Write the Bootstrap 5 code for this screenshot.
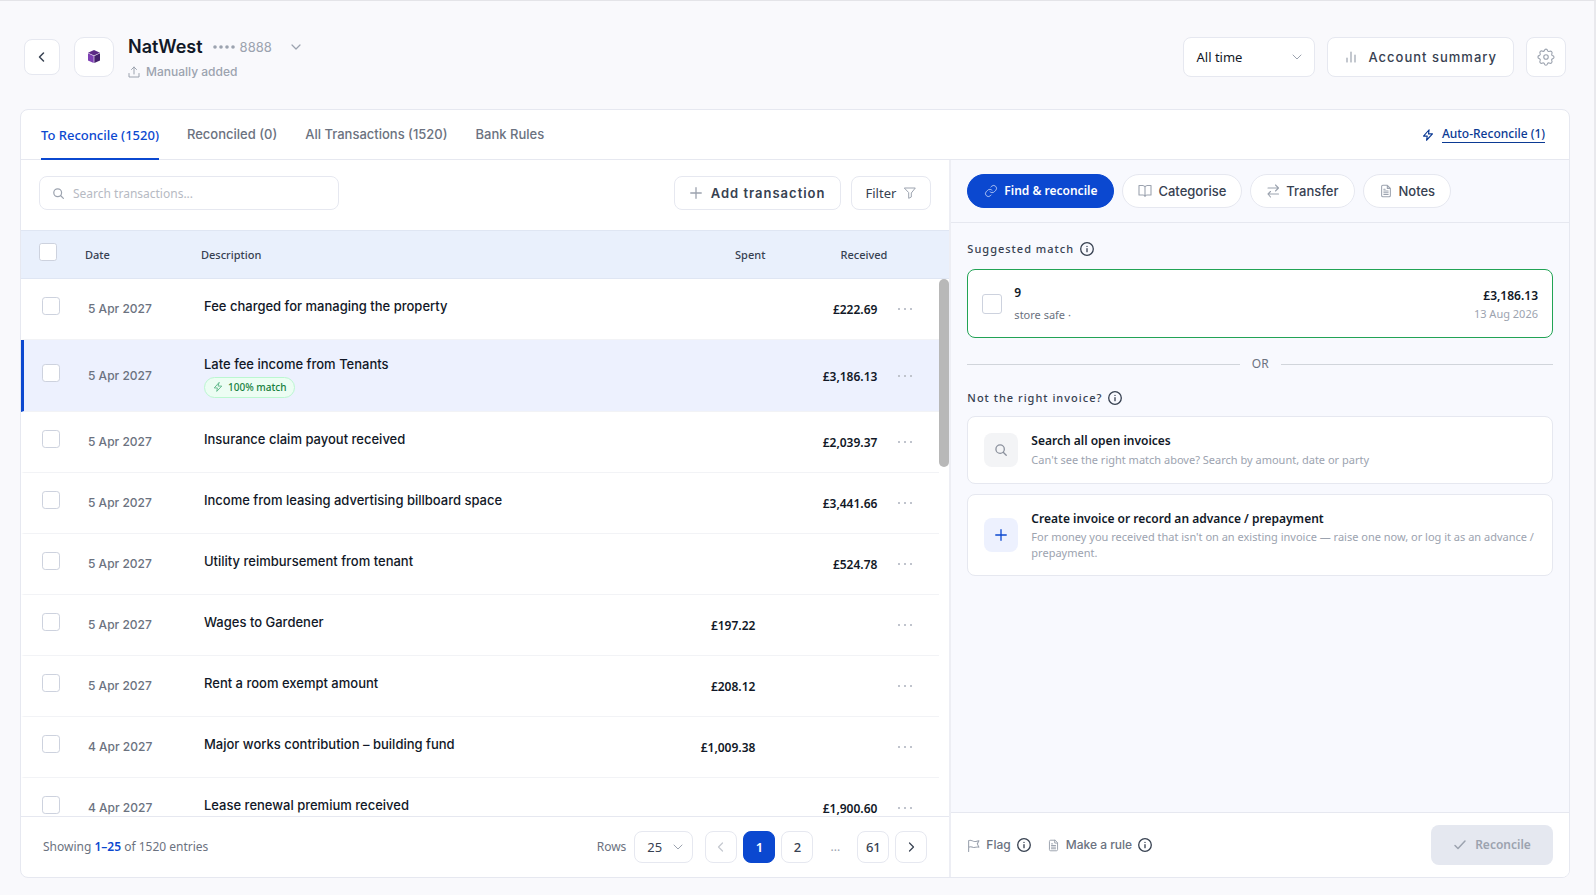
<!DOCTYPE html>
<html lang="en">
<head>
<meta charset="utf-8">
<meta name="viewport" content="width=device-width, initial-scale=1">
<title>NatWest – To Reconcile</title>
<link href="https://cdn.jsdelivr.net/npm/bootstrap@5.3.0/dist/css/bootstrap.min.css" rel="stylesheet">
<style>
:root{--line:#e6e8f0;--ink:#111827;--slate:#374151;--gray:#6b7280;--mute:#9ca3af;--blue:#0b48d0;--seg:"Noto Sans","Open Sans",sans-serif}
body{font-family:Inter,"Liberation Sans",sans-serif;font-size:13px;line-height:20px;color:var(--ink);background:#f9f9fc}
.page{height:100vh;min-height:600px;border-top:1px solid #e4e4e8;border-right:2px solid #e9e9ed;padding:36px 24px 17px 20px}
svg{flex:none;fill:none;stroke:currentColor;stroke-width:1.5;stroke-linecap:round;stroke-linejoin:round}
.seg{font-family:var(--seg)}
.box{background:#fff;border:1px solid var(--line);border-radius:8px;color:var(--slate);display:inline-flex;align-items:center;justify-content:center;padding:0;font-size:13px;line-height:20px}
.box svg{color:var(--mute)}
.box svg.dark-i,.dark-i{color:var(--slate)}
.mn0{min-height:0}
.head-bar{padding:0 4px;height:40px;margin-bottom:32px}
.head-acts{gap:12px}
.sq-back{width:36px;height:36px}
.sq{width:40px;height:40px}
.tile{border-radius:10px;margin:0 14px}
.tile svg{stroke:none}
.who{padding-top:4px}
.acct{font-size:18px;line-height:22px;font-weight:600}
.stars{margin:0 5px 0 10px}
.stars circle{fill:currentColor;stroke:none}
.swap{margin-left:18px}
.sub{margin-top:4px;gap:6px}
.mute{color:var(--mute)}
.form-select{border-color:var(--line);border-radius:8px;color:var(--ink);font-size:13px;line-height:20px;background-image:url("data:image/svg+xml,%3Csvg xmlns='http://www.w3.org/2000/svg' viewBox='0 0 12 12'%3E%3Cpath fill='none' stroke='%239ca3af' stroke-linecap='round' stroke-linejoin='round' d='M2 4l4 4 4-4'/%3E%3C/svg%3E");background-size:12px}
.sel-time{width:132px;height:40px;padding:0 36px 0 12px;background-position:right 11px center}
.sel-rows{width:59px;height:32px;padding:0 24px 0 12px;background-position:right 8px center;color:var(--slate)}
.btn-sum{height:40px;padding:0 16px;gap:10px;letter-spacing:1px;font-weight:500}
.panel{background:#fff;border:1px solid var(--line);border-radius:8px;overflow:hidden}
.tabs{height:50px;border-bottom:1px solid var(--line);padding:0 24px 0 20px;flex:none}
.tabs .tab{color:var(--gray);text-decoration:none;font-weight:500;display:flex;align-items:center;height:50px;margin-right:28px;border-bottom:2px solid transparent}
.tabs .tab.active{font-family:var(--seg);color:var(--blue);border-color:var(--blue);padding-top:2px}
.auto{color:#0b3a94;text-decoration:none;font-weight:500;font-size:12px;gap:8px}
.auto span{border-bottom:1px solid #0b3a94;line-height:16px}
.left{flex:1 1 0;min-width:0;border-right:2px solid #edeef4}
.right{width:39.9%;min-width:0;background:#f8f9fe}
.tools{padding:16px 18px 20px;gap:10px}
.search{width:300px;height:34px;padding:0 12px;gap:8px;justify-content:flex-start}
.search input{border:0;outline:0;background:none;min-width:0;flex:1;padding:2px 0 0;font-size:12px;color:var(--ink)}
.search input::placeholder{color:#b6bac3}
.btn-add{height:34px;padding:0 14px;gap:8px;letter-spacing:1px;font-weight:600}
.btn-fil{height:34px;padding:0 14px;gap:8px}
.grid{width:100%;table-layout:fixed;border-collapse:separate;border-spacing:0}
.grid th,.grid td{padding:0;vertical-align:middle}
.grid th{height:49px;background:#e9f0fc;border:solid #dfe6f3;border-width:1px 0;font-family:var(--seg);font-size:11px;font-weight:500}
.grid td{height:61px;border-bottom:1px solid #f2f3f6}
.grid td:first-child{border-left:3px solid transparent}
.grid .on td{height:72px;background:#edf1fe}
.grid .on td:first-child{border-left-color:var(--blue)}
.grid .c1{width:64px;padding-left:18px}
.grid .c2{width:116px}
.grid .c4{width:120px;text-align:right}
.grid .c5{width:122px;text-align:right}
.grid .c6{width:62px}
.grid th{color:var(--slate)}
.grid td.c1{width:67px}
.grid td.c2{color:var(--gray);font-size:12px;font-weight:500}
.grid td.c3{font-weight:500;padding-bottom:6px}
.grid .on td.c3{padding-bottom:0}
.grid td.c4,.grid td.c5{font-family:var(--seg);font-size:12px;font-weight:600;padding-top:2px}
.form-check-input{width:18px;height:18px;margin:0 0 6px;border:1px solid #cdd2de;border-radius:5px;display:block}
.more{border:0;background:none;padding:0 0 0 20px;display:block;color:#c0c4cd;line-height:0}
.more svg{fill:currentColor;stroke:none}
.pill-ok{display:flex;width:fit-content;align-items:center;gap:5px;height:21px;margin-top:3px;padding:0 8px;border:1px solid #bbf7d0;border-radius:11px;background:#ecfdf3;color:#15803d;font:500 10px/16px var(--seg)}
.pill-ok svg{color:#5fb98a}
.bar-thumb{width:10px;height:188px;border-radius:5px;background:#b8b8b8;flex:none}
.foot{height:61px;flex:none;border-top:1px solid var(--line);padding:0 22px;font-size:12px;color:var(--gray)}
.foot b{color:var(--blue);font-weight:600}
.pages{gap:6px;margin-left:12px}
.pg{width:32px;height:32px;text-decoration:none;font-family:var(--seg);font-weight:500}
.pg.cur{background:var(--blue);border-color:var(--blue);color:#fff;font-weight:600}
.gap-dots{width:32px;text-align:center}
.modes{padding:14px 16px;border-bottom:1px solid var(--line)}
.mode{height:34px;border-radius:17px;padding:0 15px;gap:6px;font-weight:500}
.mode.cur{background:var(--blue);border-color:var(--blue);color:#fff;font-family:var(--seg);font-size:12px;font-weight:600;padding:0 16px}
.mode.cur svg{color:#b9ccf6}
.cap{font-family:var(--seg);font-size:11px;font-weight:500;letter-spacing:1px;color:var(--slate);gap:6px}
.opt{background:#fff;border:1px solid var(--line);border-radius:8px;padding:14px 16px;gap:13px;text-align:left;width:100%;font-family:var(--seg);font-size:12px;color:var(--ink)}
.opt b{font-weight:600;display:block}
.opt small{display:block;color:var(--mute);font-size:11px;line-height:16px}
.opt .one{line-height:18px}
.ic{width:34px;height:34px;border-radius:8px;background:#f3f4f6;color:#8b919d;display:flex;align-items:center;justify-content:center;flex:none}
.ic.add{background:#edf1fe;color:var(--blue)}
.match{border-color:#22a355;padding:14px;gap:12px}
.match .ref-no{line-height:18px;margin-bottom:5px}
.match .party{color:var(--gray)}
.match .form-check-input{width:20px;height:20px;margin:0}
.gap-b{margin-bottom:10px}
.or{gap:12px;margin:16px 0 14px;font:12px/20px var(--seg);color:var(--gray)}
.rule-line{height:1px;background:#d1d5db;flex:1}
.act{height:65px;flex:none;border-top:1px solid var(--line);background:#fff;padding:0 16px}
.act .txt{border:0;background:none;padding:0;color:var(--gray);font-weight:500;font-size:12px;display:flex;align-items:center;gap:6px}
.act .txt svg:first-child{color:var(--mute)}
.btn-rec{width:122px;height:40px;border:0;border-radius:8px;background:#e5e8f0;color:#9ca3af;font-family:var(--seg);font-size:12px;font-weight:600;display:flex;align-items:center;justify-content:center;gap:8px}
</style>
</head>
<body>
<svg width="0" height="0" class="position-absolute" aria-hidden="true">
<symbol id="bolt" viewBox="0 0 16 16"><path d="M9.500 1L2 9.500H7L6 15L14 6.500H8.700z"/></symbol>
<symbol id="info" viewBox="0 0 16 16"><circle cx="8" cy="8" r="7.200"/><path d="M8 7.500v3.500M8 4.900v.2"/></symbol>
<symbol id="doc" viewBox="0 0 16 16"><g stroke-width="1.200"><path d="M9.500 1.500H4.500a1.500 1.500 0 0 0-1.500 1.500v10a1.500 1.500 0 0 0 1.500 1.500h7a1.500 1.500 0 0 0 1.500-1.500V5zM9.500 1.500V5H13M5.500 8h5M5.500 10h5M5.500 12h5M5.500 6h1.500"/></g></symbol>
<symbol id="lens" viewBox="0 0 16 16"><circle cx="7" cy="7" r="4.800"/><path d="M10.500 10.500L14 14"/></symbol>
<symbol id="plus" viewBox="0 0 16 16"><path d="M8 2v12M2 8h12"/></symbol>
<symbol id="dots" viewBox="0 0 16 4"><path d="M1 1h2v2H1zM7 1h2v2H7zM13 1h2v2h-2z"/></symbol>
</svg>
<div class="page d-flex flex-column">
<header class="head-bar d-flex align-items-center">
<button class="box sq-back" aria-label="Back"><svg class="dark-i" width="12" height="12" viewBox="0 0 12 12"><path d="M7.500 2L3.500 6l4 4"/></svg></button>
<span class="box sq tile"><svg width="14" height="16" viewBox="0 0 14 16"><path fill="#5b2a86" d="M7 1l6 2.700L7 6.600 1 3.700z"/><path fill="#7e3fb4" d="M1 4.300l5.700 2.800V14L1 11.500z"/><path fill="#43206b" d="M13 4.300L7.300 7.100V14l5.700-2.500z"/></svg></span>
<div class="who">
<div class="d-flex align-items-center"><span class="acct">NatWest</span><svg class="mute stars" width="22" height="4" viewBox="0 0 22 4"><circle cx="2" cy="2" r="1.800"/><circle cx="8" cy="2" r="1.800"/><circle cx="14" cy="2" r="1.800"/><circle cx="20" cy="2" r="1.800"/></svg><span class="mute">8888</span><button class="border-0 bg-transparent p-0 mute d-flex swap" aria-label="Switch account"><svg width="12" height="12" viewBox="0 0 12 12"><path stroke-width="1.200" d="M2 4l4 4 4-4"/></svg></button></div>
<div class="d-flex align-items-center sub mute fw-medium"><svg width="12" height="12" viewBox="0 0 12 12"><path stroke-width="1" d="M6 8V1M3.500 3.500L6 1l2.500 2.500M1 7.500V11h10V7.500"/></svg><span style="font-size:12px">Manually added</span></div>
</div>
<div class="d-flex head-acts ms-auto">
<select class="form-select sel-time seg" aria-label="Period"><option>All time</option></select>
<button class="box btn-sum"><svg width="14" height="14" viewBox="0 0 14 14"><path stroke-width="1.200" d="M3 8v4M7 2v10M11 5v7"/></svg>Account summary</button>
<button class="box sq" aria-label="Settings"><svg width="18" height="18" viewBox="0 0 24 24"><circle cx="12" cy="12" r="3"/><path d="M12 1.500c1.300 0 1.800.8 2.200 2.200.4.900 1.300 1.200 2.200.8 1.300-.7 2.200-.6 3.100.3.900.9.900 1.900.2 3.100-.4.900 0 1.800.8 2.200 1.400.4 2.200.900 2.200 2.200s-.8 1.800-2.200 2.200c-.9.400-1.200 1.300-.8 2.200.7 1.300.6 2.200-.3 3.100-.9.900-1.900.9-3.100.2-.9-.4-1.800 0-2.200.8-.4 1.400-.9 2.200-2.200 2.200s-1.800-.8-2.200-2.200c-.4-.9-1.300-1.200-2.200-.8-1.300.7-2.200.6-3.100-.3-.9-.9-.9-1.900-.2-3.100.4-.9 0-1.800-.8-2.200C2 13.900 1.200 13.300 1.200 12s.8-1.800 2.200-2.200c.9-.4 1.200-1.300.8-2.200-.7-1.300-.6-2.200.3-3.100.9-.9 1.900-.9 3.100-.2.900.4 1.800 0 2.200-.8.400-1.300.9-2 2.200-2z"/></svg></button>
</div>
</header>
<main class="panel flex-grow-1 d-flex flex-column mn0">
<nav class="tabs d-flex align-items-center">
<a class="tab active" href="#">To Reconcile (1520)</a><a class="tab" href="#">Reconciled (0)</a><a class="tab" href="#">All Transactions (1520)</a><a class="tab" href="#">Bank Rules</a>
<a class="auto seg d-flex align-items-center ms-auto" href="#"><svg width="12" height="12"><use href="#bolt"/></svg><span>Auto-Reconcile (1)</span></a>
</nav>
<div class="d-flex flex-grow-1 mn0">
<section class="left d-flex flex-column">
<div class="tools d-flex align-items-center">
<label class="box search seg"><svg width="13" height="13"><use href="#lens"/></svg><input type="text" placeholder="Search transactions..." aria-label="Search transactions"></label>
<button class="box btn-add ms-auto"><svg width="14" height="14"><use href="#plus"/></svg>Add transaction</button>
<button class="box btn-fil seg">Filter<svg width="12" height="12" viewBox="0 0 12 12"><path stroke-width="1" d="M.7 1h10.600L7.300 6v4L4.700 11.300V6z"/></svg></button>
</div>
<table class="grid"><thead><tr><th class="c1"><input class="form-check-input" type="checkbox" aria-label="Select all"></th><th class="c2">Date</th><th class="c3">Description</th><th class="c4">Spent</th><th class="c5">Received</th><th class="c6"></th></tr></thead></table>
<div class="d-flex flex-grow-1 overflow-hidden mn0">
<div class="flex-grow-1">
<table class="grid"><tbody>
<tr><td class="c1"><input class="form-check-input" type="checkbox" aria-label="Select"></td><td class="c2">5 Apr 2027</td><td class="c3">Fee charged for managing the property</td><td class="c4"></td><td class="c5">£222.69</td><td class="c6"><button class="more" aria-label="More"><svg width="16" height="4"><use href="#dots"/></svg></button></td></tr>
<tr class="on"><td class="c1"><input class="form-check-input" type="checkbox" aria-label="Select"></td><td class="c2">5 Apr 2027</td><td class="c3"><div>Late fee income from Tenants</div><span class="pill-ok"><svg width="10" height="10"><use href="#bolt"/></svg>100% match</span></td><td class="c4"></td><td class="c5">£3,186.13</td><td class="c6"><button class="more" aria-label="More"><svg width="16" height="4"><use href="#dots"/></svg></button></td></tr>
<tr><td class="c1"><input class="form-check-input" type="checkbox" aria-label="Select"></td><td class="c2">5 Apr 2027</td><td class="c3">Insurance claim payout received</td><td class="c4"></td><td class="c5">£2,039.37</td><td class="c6"><button class="more" aria-label="More"><svg width="16" height="4"><use href="#dots"/></svg></button></td></tr>
<tr><td class="c1"><input class="form-check-input" type="checkbox" aria-label="Select"></td><td class="c2">5 Apr 2027</td><td class="c3">Income from leasing advertising billboard space</td><td class="c4"></td><td class="c5">£3,441.66</td><td class="c6"><button class="more" aria-label="More"><svg width="16" height="4"><use href="#dots"/></svg></button></td></tr>
<tr><td class="c1"><input class="form-check-input" type="checkbox" aria-label="Select"></td><td class="c2">5 Apr 2027</td><td class="c3">Utility reimbursement from tenant</td><td class="c4"></td><td class="c5">£524.78</td><td class="c6"><button class="more" aria-label="More"><svg width="16" height="4"><use href="#dots"/></svg></button></td></tr>
<tr><td class="c1"><input class="form-check-input" type="checkbox" aria-label="Select"></td><td class="c2">5 Apr 2027</td><td class="c3">Wages to Gardener</td><td class="c4">£197.22</td><td class="c5"></td><td class="c6"><button class="more" aria-label="More"><svg width="16" height="4"><use href="#dots"/></svg></button></td></tr>
<tr><td class="c1"><input class="form-check-input" type="checkbox" aria-label="Select"></td><td class="c2">5 Apr 2027</td><td class="c3">Rent a room exempt amount</td><td class="c4">£208.12</td><td class="c5"></td><td class="c6"><button class="more" aria-label="More"><svg width="16" height="4"><use href="#dots"/></svg></button></td></tr>
<tr><td class="c1"><input class="form-check-input" type="checkbox" aria-label="Select"></td><td class="c2">4 Apr 2027</td><td class="c3">Major works contribution – building fund</td><td class="c4">£1,009.38</td><td class="c5"></td><td class="c6"><button class="more" aria-label="More"><svg width="16" height="4"><use href="#dots"/></svg></button></td></tr>
<tr><td class="c1"><input class="form-check-input" type="checkbox" aria-label="Select"></td><td class="c2">4 Apr 2027</td><td class="c3">Lease renewal premium received</td><td class="c4"></td><td class="c5">£1,900.60</td><td class="c6"><button class="more" aria-label="More"><svg width="16" height="4"><use href="#dots"/></svg></button></td></tr>
</tbody></table>
</div>
<div class="bar-thumb"></div>
</div>
<div class="foot seg d-flex align-items-center">
<span>Showing <b>1–25</b> of 1520 entries</span>
<label class="ms-auto me-2" for="rows">Rows</label><select id="rows" class="form-select sel-rows"><option>25</option></select>
<div class="d-flex align-items-center pages">
<button class="box pg" aria-label="Previous"><svg width="12" height="12" viewBox="0 0 12 12"><path stroke-width="1.200" d="M7.500 2L3.500 6l4 4" opacity=".6"/></svg></button><a class="box pg cur" href="#">1</a><a class="box pg" href="#">2</a><span class="gap-dots mute">...</span><a class="box pg" href="#">61</a><button class="box pg" aria-label="Next"><svg class="dark-i" width="12" height="12" viewBox="0 0 12 12"><path stroke-width="1.200" d="M4.500 2l4 4-4 4"/></svg></button>
</div>
</div>
</section>
<aside class="right d-flex flex-column">
<div class="modes d-flex gap-2">
<button class="box mode cur"><svg width="14" height="14" viewBox="0 0 24 24"><path d="M10 13a5 5 0 0 0 7.500.5l3-3a5 5 0 0 0-7-7l-1.700 1.700M14 11a5 5 0 0 0-7.500-.5l-3 3a5 5 0 0 0 7 7l1.700-1.700"/></svg>Find &amp; reconcile</button>
<button class="box mode"><svg width="14" height="14" viewBox="0 0 14 14"><path stroke-width="1.100" d="M7 3v9.500M7 3C6.500 2 5.500 1.500 4.500 1.500H1v9.500h4c1 0 2 .5 2 1.500 0-1 1-1.500 2-1.500h4V1.500H9.500C8.500 1.500 7.500 2 7 3z"/></svg>Categorise</button>
<button class="box mode"><svg width="14" height="14" viewBox="0 0 14 14"><path stroke-width="1.100" d="M2 4h10.500M9.500 1l3 3-3 3M12.500 10H2M4.500 7.500L2 10l2.500 3"/></svg>Transfer</button>
<button class="box mode"><svg width="14" height="14"><use href="#doc"/></svg>Notes</button>
</div>
<div class="flex-grow-1 p-3 overflow-hidden">
<div class="cap d-flex align-items-center gap-b"><span>Suggested match</span><svg width="14" height="14"><use href="#info"/></svg></div>
<label class="opt match d-flex align-items-center"><input class="form-check-input" type="checkbox"><span class="flex-grow-1"><b class="ref-no">9</b><small class="party">store safe ·</small></span><span class="text-end"><b>£3,186.13</b><small>13 Aug 2026</small></span></label>
<div class="or d-flex align-items-center"><span class="rule-line"></span><span>OR</span><span class="rule-line"></span></div>
<div class="cap d-flex align-items-center mb-2"><span>Not the right invoice?</span><svg width="14" height="14"><use href="#info"/></svg></div>
<button class="opt d-flex align-items-center gap-b"><span class="ic"><svg width="14" height="14"><use href="#lens"/></svg></span><span><b>Search all open invoices</b><small class="one">Can't see the right match above? Search by amount, date or party</small></span></button>
<button class="opt d-flex align-items-center"><span class="ic add"><svg width="14" height="14"><use href="#plus"/></svg></span><span><b>Create invoice or record an advance / prepayment</b><small>For money you received that isn't on an existing invoice — raise one now, or log it as an advance / prepayment.</small></span></button>
</div>
<div class="act d-flex align-items-center">
<button class="txt"><svg width="13" height="13" viewBox="0 0 12 12"><path stroke-width="1" d="M1.500 11.500V1.500c2.500-1.500 4 1.500 6.500.8 1.200-.3 1.700-.8 3-.6L9.500 4.500 11 7.500C8 7 7 8.500 5 7.500 3.500 7 2.700 7 1.500 7.700"/></svg>Flag<svg class="dark-i" width="14" height="14"><use href="#info"/></svg></button>
<button class="txt ms-3"><svg width="13" height="13"><use href="#doc"/></svg>Make a rule<svg class="dark-i" width="14" height="14"><use href="#info"/></svg></button>
<button class="btn-rec ms-auto" disabled><svg width="14" height="14" viewBox="0 0 14 14"><path d="M2 7.500L5 10.500 12 3"/></svg>Reconcile</button>
</div>
</aside>
</div>
</main>
</div>
<script src="https://cdn.jsdelivr.net/npm/bootstrap@5.3.0/dist/js/bootstrap.bundle.min.js"></script>
</body>
</html>
